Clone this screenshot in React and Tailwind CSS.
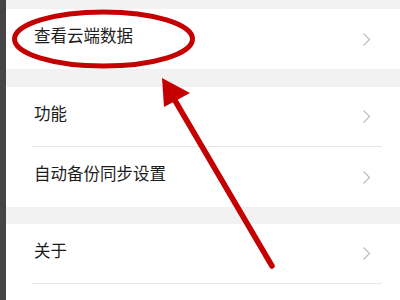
import React from "react";

function Chevron() {
  return (
    <svg width="9" height="15" viewBox="0 0 9 15" className="shrink-0">
      <path d="M1.5 1.5 L7.5 7.5 L1.5 13.5" fill="none" stroke="#bdbdbd" strokeWidth="1.2" />
    </svg>
  );
}

function Row({ label, sep }) {
  return (
    <div className="h-[60px] bg-white">
      <div
        className={`h-full ml-[26px] mr-[18px] flex items-center justify-between ${
          sep ? "border-b border-[#e6e6e6]" : ""
        }`}
      >
        <span className="pl-[2px] mb-[7px] text-[16.5px] text-[#1c1c1c] leading-none">{label}</span>
        <div className="mr-[11px]">
          <Chevron />
        </div>
      </div>
    </div>
  );
}

export default function App() {
  return (
    <div
      className="relative w-[400px] h-[300px] overflow-hidden flex bg-white"
      style={{ fontFamily: '"Noto Sans CJK SC", "Noto Sans", sans-serif' }}
    >
      <div className="w-[6px] bg-[#454545] shrink-0" />
      <div className="flex-1 flex flex-col bg-white">
        <div className="h-[9px] bg-[#f2f2f2]" />
        <Row label="查看云端数据" />
        <div className="h-[18px] bg-[#f2f2f2]" />
        <Row label="功能" sep />
        <Row label="自动备份同步设置" />
        <div className="h-[17px] bg-[#f2f2f2]" />
        <Row label="关于" sep />
        <div className="flex-1 bg-white" />
      </div>
      <svg
        className="absolute inset-0 pointer-events-none"
        width="400"
        height="300"
        viewBox="0 0 400 300"
      >
        <ellipse cx="103.5" cy="39" rx="89" ry="27" fill="none" stroke="#c40000" strokeWidth="5" />
        <line x1="170" y1="92" x2="272" y2="266" stroke="#c40000" strokeWidth="5.5" strokeLinecap="round" />
        <polygon points="162,78 190,93 164,107" fill="#c40000" />
      </svg>
    </div>
  );
}
